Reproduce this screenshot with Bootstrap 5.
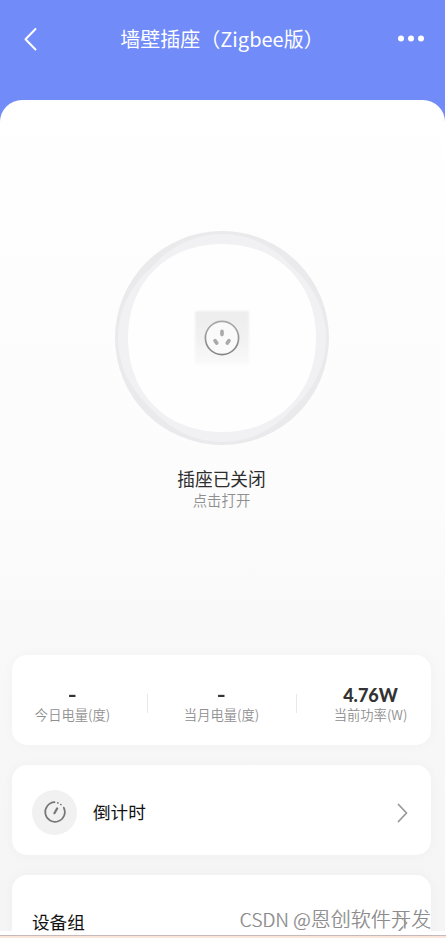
<!DOCTYPE html>
<html lang="zh-CN">
<head>
<meta charset="utf-8">
<meta name="viewport" content="width=device-width, initial-scale=1">
<title>墙壁插座（Zigbee版）</title>
<link href="https://cdn.jsdelivr.net/npm/bootstrap@5.3.0/dist/css/bootstrap.min.css" rel="stylesheet">
<style>
body{width:446px;height:938px;overflow:hidden;background:#fff;font-family:"Noto Sans CJK SC",sans-serif;line-height:1}
.screen{width:445px;height:931px;overflow:hidden;background:#718bf8}
.topbar{height:100px;padding:20px 20px 0 23px}
.topbar-row{height:37px}
.topbar-title{font-size:20px;line-height:36px;padding-right:4px}
.sheet{height:831px;border-radius:22px 22px 0 0;background:linear-gradient(#fff 0,#fdfdfd 180px,#fcfcfc 400px,#fafafa 480px,#f7f7f7 640px,#f5f5f5 800px);padding:130px 14px 0 12px}
.status{height:425px}
.dial{width:216px;height:216px;margin-left:1px}
.state{font-size:17.7px;line-height:22px;margin-top:21px;color:#2d2d2d}
.hint{font-size:14.4px;line-height:22px;color:#8f8f8f;font-weight:350}
.panel{border-radius:15px;background:#fff;box-shadow:0 0 12px rgba(0,0,0,.03);height:90px;flex:none}
.panels{gap:20px}
.stat{width:121px;padding-top:29px}
.stat-value{font-family:Lato,"Noto Sans CJK SC",sans-serif;font-size:18px;font-weight:900;line-height:22px;color:#333;height:22px}
.dash span{display:inline-block;transform:scaleX(1.35)}
.stat-label{font-size:13.3px;line-height:18px;color:#8f8f8f;font-weight:350;white-space:nowrap}
.divider{width:1px;height:19px;background:#e8e8e8;margin-top:6px}
.round-icon{width:45px;height:45px;background:#f1f1f1}
.item{font-size:17.6px;color:#111}
.row-pad{padding-top:4px}
.base{height:7px;width:446px;border-bottom:2px solid #fbe6dc}
.base-rule{height:1px;background:#c5b9b9;margin-top:4px}
.watermark{right:15px;bottom:6px;font-size:20.1px;line-height:26px;color:#8b8b8b;font-weight:300;white-space:nowrap;text-shadow:-1px -1px 0 rgba(255,255,255,.85),.4px .4px 0 #aaa}
.watermark span{font-size:19.2px}
</style>
<script src="https://cdn.jsdelivr.net/npm/bootstrap@5.3.0/dist/js/bootstrap.bundle.min.js"></script>
</head>
<body class="position-relative">
<main class="screen">
  <header class="topbar text-white">
    <div class="topbar-row d-flex align-items-center justify-content-between">
      <svg width="28" height="26" viewBox="0 0 28 26" fill="none" stroke="#fff" stroke-width="2" stroke-linecap="round" stroke-linejoin="round"><path d="M12.5 3 2.5 13.2 12.5 23.5"/></svg>
      <h1 class="topbar-title fw-normal m-0">墙壁插座（Zigbee版）</h1>
      <svg width="28" height="26" viewBox="0 0 28 26" fill="#fff"><circle cx="4" cy="12.500" r="3"/><circle cx="14" cy="12.500" r="3"/><circle cx="24" cy="12.500" r="3"/></svg>
    </div>
  </header>
  <section class="sheet">
    <div class="status d-flex flex-column align-items-center">
      <svg class="dial flex-shrink-0" viewBox="0 0 216 216">
        <defs>
          <linearGradient id="plate" x2="0" y2="1"><stop stop-color="#ededee"/><stop offset=".55" stop-color="#f2f2f3"/><stop offset="1" stop-color="#fafafa"/></linearGradient>
          <linearGradient id="rim" x2="0" y2="1"><stop stop-color="#a9a9a9"/><stop offset="1" stop-color="#858585"/></linearGradient>
          <filter id="soft" x="-10%" y="-10%" width="120%" height="120%"><feGaussianBlur stdDeviation=".8"/></filter>
          <filter id="edge"><feGaussianBlur stdDeviation=".5"/></filter>
        </defs>
        <g filter="url(#edge)">
          <circle cx="108" cy="108" r="107" fill="#eaeaec"/>
          <ellipse cx="108" cy="108" rx="96" ry="104" fill="#f1f1f3"/>
          <ellipse cx="108" cy="108" rx="104" ry="96" fill="#f1f1f3"/>
          <path d="M108 14C163.500 14 202 52.500 202 108S163.500 202 108 202 14 163.500 14 108 52.500 14 108 14Z" fill="#fefefe"/>
        </g>
        <rect x="81" y="81" width="54" height="54" rx="2" fill="url(#plate)" filter="url(#soft)"/>
        <circle cx="108" cy="108" r="16.600" fill="#fafafa" stroke="url(#rim)" stroke-width="1.700"/>
        <g stroke="#aaa" stroke-width="3.600" stroke-linecap="round"><path d="M108 101.200v3.400M101 110.600l1.800 2.500M115 110.600l-1.800 2.500"/></g>
      </svg>
      <div class="state">插座已关闭</div>
      <div class="hint">点击打开</div>
    </div>
    <div class="panels d-flex flex-column">
      <div class="panel d-flex justify-content-between align-items-start">
        <div class="stat text-center"><div class="stat-value dash"><span>-</span></div><div class="stat-label">今日电量(度)</div></div>
        <div class="divider align-self-center"></div>
        <div class="stat text-center"><div class="stat-value dash"><span>-</span></div><div class="stat-label">当月电量(度)</div></div>
        <div class="divider align-self-center"></div>
        <div class="stat text-center"><div class="stat-value">4.76W</div><div class="stat-label">当前功率(W)</div></div>
      </div>
      <div class="panel row-pad d-flex align-items-center ps-3 pe-3">
        <div class="round-icon rounded-circle d-flex align-items-center justify-content-center ms-1">
          <svg width="24" height="24" viewBox="0 0 24 24" fill="none" stroke="#777" stroke-width="1.7" stroke-linecap="round"><path d="M11.500 2.200A9.800 9.800 0 1 0 20.800 7.600"/><path d="M11.400 13.200 14.200 8.400" stroke-width="2.200"/><path d="M14.800 2.900h.1M17.800 4.500h.1"/></svg>
        </div>
        <span class="item ms-3">倒计时</span>
        <svg class="ms-auto me-1" width="16" height="22" viewBox="0 0 16 22" fill="none" stroke="#999" stroke-width="1.8" stroke-linecap="round" stroke-linejoin="round"><path d="m3.500 3.500 8 8.500L3.500 20.500"/></svg>
      </div>
      <div class="panel row-pad d-flex align-items-center ps-3 pe-3">
        <span class="item ms-1">设备组</span>
        <svg class="ms-auto me-1" width="16" height="22" viewBox="0 0 16 22" fill="none" stroke="#999" stroke-width="1.8" stroke-linecap="round" stroke-linejoin="round"><path d="m3.500 3.500 8 8.500L3.500 20.500"/></svg>
      </div>
    </div>
  </section>
</main>
<footer class="base d-flex flex-column"><div class="base-rule"></div></footer>
<div class="watermark position-absolute"><span>CSDN @</span>恩创软件开发</div>
</body>
</html>
